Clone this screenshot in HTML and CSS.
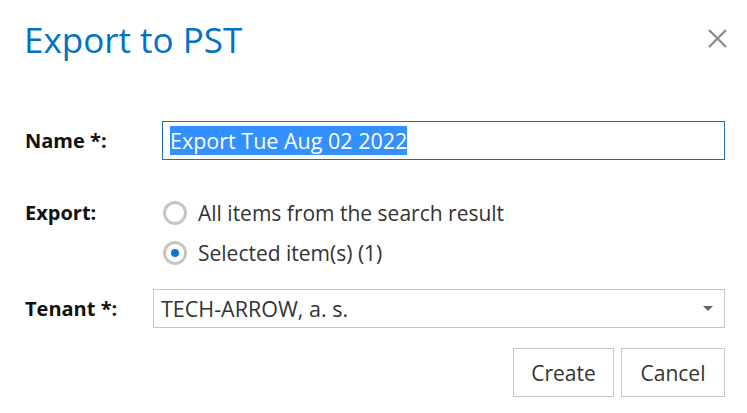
FILE: index.html
```html
<!DOCTYPE html>
<html>
<head>
<meta charset="utf-8">
<link rel="stylesheet" href="styles.css">
</head>
<body>
<div class="dialog">
  <div class="header">
    <h1 class="title">Export to PST</h1>
    <button class="close" aria-label="Close">
      <svg width="19" height="19" viewBox="0 0 19 19"><path d="M1 1 L18 18 M18 1 L1 18" stroke="#8a8a8a" stroke-width="2.2" fill="none"/></svg>
    </button>
  </div>
  <div class="form">
    <div class="label name-label">Name *:</div>
    <div class="field">
      <div class="text-input"><span class="sel">Export Tue Aug 02 2022</span></div>
    </div>

    <div class="label export-label">Export:</div>
    <div class="field radios">
      <div class="radio-row"><span class="radio"></span><span class="radio-text">All items from the search result</span></div>
      <div class="radio-row"><span class="radio checked"></span><span class="radio-text">Selected item(s) (1)</span></div>
    </div>

    <div class="label tenant-label">Tenant *:</div>
    <div class="field">
      <div class="select"><span>TECH-ARROW, a. s.</span><span class="arrow"></span></div>
    </div>
  </div>
  <div class="buttons">
    <button class="btn create">Create</button>
    <button class="btn">Cancel</button>
  </div>
</div>
</body>
</html>
```
FILE: styles.css
```css
html, body {
  margin: 0;
  padding: 0;
  background: #ffffff;
}
body {
  font-family: "Segoe UI", "Open Sans", sans-serif;
  width: 747px;
  height: 413px;
  overflow: hidden;
}
.dialog {
  padding: 0 22px 0 25px;
}
.header {
  display: flex;
  justify-content: space-between;
  align-items: flex-start;
  height: 121px;
}
.title {
  margin: 18px 0 0 -1px;
  font-weight: 400;
  font-size: 35px;
  line-height: 44px;
  color: #0072c6;
}
.close {
  margin-top: 29px;
  margin-right: -2px;
  padding: 0;
  border: 0;
  background: none;
  width: 19px;
  height: 19px;
  display: block;
}
.close svg { display: block; }
.form {
  display: grid;
  grid-template-columns: 128px 1fr;
  align-items: start;
}
.label {
  font-weight: 700;
  font-size: 20px;
  color: #111;
}
.name-label {
  line-height: 39px;
  height: 39px;
}
.text-input {
  margin-left: 9px;
  height: 37px;
  border: 1px solid #1f6db5;
  display: flex;
  align-items: center;
  padding-left: 7px;
}
.sel {
  background: #3390ff;
  color: #fff;
  font-size: 21.5px;
  line-height: 29px;
  height: 29px;
}
.export-label {
  margin-top: 33px;
  line-height: 40px;
}
.radios {
  margin-top: 33px;
  padding-left: 9px;
}
.radio-row {
  display: flex;
  align-items: center;
  height: 40px;
}
.radio {
  width: 18px;
  height: 18px;
  border: 3px solid #c6c6c6;
  border-radius: 50%;
  box-sizing: content-box;
  display: flex;
  align-items: center;
  justify-content: center;
  margin-left: 1px;
}
.radio.checked::after {
  content: "";
  width: 8px;
  height: 8px;
  border-radius: 50%;
  background: #0a75d0;
}
.radio-text {
  margin-left: 11px;
  font-size: 21px;
  color: #333;
}
.tenant-label {
  margin-top: 16px;
  line-height: 39px;
}
.select {
  margin-top: 16px;
  height: 37px;
  border: 1px solid #c6c6c6;
  display: flex;
  align-items: center;
  justify-content: space-between;
  padding: 0 11px 0 7px;
  font-size: 21.5px;
  color: #333;
}
.arrow {
  width: 0;
  height: 0;
  border-left: 5px solid transparent;
  border-right: 5px solid transparent;
  border-top: 5px solid #666;
}
.buttons {
  display: flex;
  justify-content: flex-end;
  gap: 7px;
  margin-top: 20px;
}
.btn {
  font-family: "Segoe UI", "Open Sans", sans-serif;
  height: 49px;
  padding: 0;
  background: #fff;
  border: 1px solid #c6c6c6;
  font-size: 21px;
  color: #333;
  width: 104px;
}
.btn.create {
  width: 101px;
}
```
